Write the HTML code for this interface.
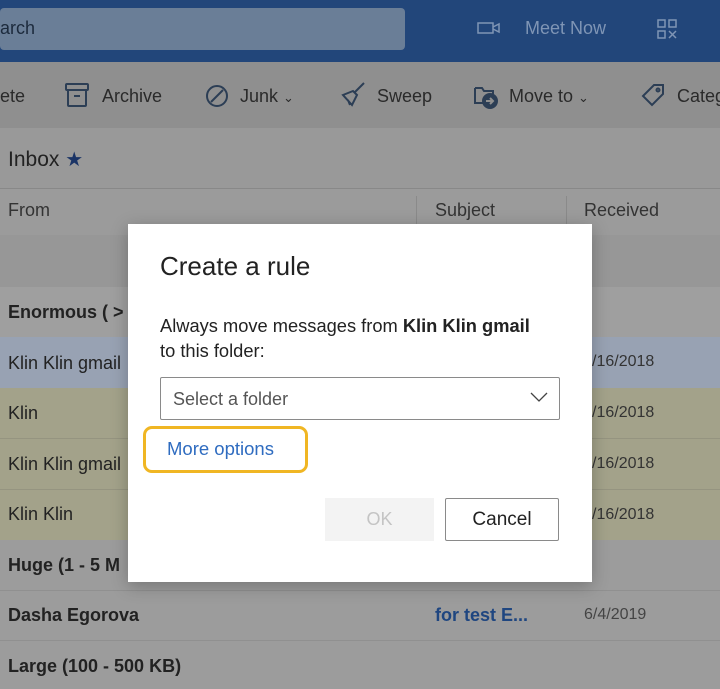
<!DOCTYPE html>
<html><head><style>
*{margin:0;padding:0;box-sizing:border-box}
body{width:720px;height:689px;overflow:hidden;font-family:"Liberation Sans",sans-serif;background:#9c9c9c;position:relative;color:#1e1e1e}
.a{position:absolute}
.t{font-size:18px;color:#222;white-space:nowrap}
</style></head><body>
<div class="a" style="left:0;top:0;width:720px;height:62px;background:#22467a"></div>
<div class="a" style="left:0;top:8px;width:405px;height:42px;background:#6a7e97;border-radius:4px"></div>
<div class="a t" style="left:0;top:18px;color:#1c2a3c">arch</div>
<svg class="a" style="left:477px;top:20px" width="26" height="16"><rect x="1" y="3" width="15" height="10" fill="none" stroke="#7f95b5" stroke-width="1.5"/><path d="M16 7 L22 4 V12 L16 9" fill="none" stroke="#7f95b5" stroke-width="1.5"/></svg>
<div class="a t" style="left:525px;top:18px;color:#7f95b5">Meet Now</div>
<svg class="a" style="left:657px;top:19px" width="20" height="20" fill="none" stroke="#7f95b5" stroke-width="1.5"><rect x="1" y="1" width="7" height="7"/><rect x="12" y="1" width="7" height="7"/><rect x="1" y="12" width="7" height="7"/><path d="M12 12 L19 19 M19 12 L12 19"/></svg>
<div class="a" style="left:0;top:62px;width:720px;height:66px;background:#8f8f8f"></div>
<div class="a t" style="left:0;top:86px;color:#2a2a2a">ete</div>
<svg class="a" style="left:65px;top:83px" width="24" height="24" fill="none" stroke="#2c3e55" stroke-width="2"><rect x="1" y="1" width="22" height="6" rx="1"/><rect x="3" y="7" width="18" height="16" rx="1"/><path d="M9 13 H15"/></svg>
<div class="a t" style="left:102px;top:86px;color:#2a2a2a">Archive</div>
<svg class="a" style="left:205px;top:84px" width="24" height="24" fill="none" stroke="#2c3e55" stroke-width="2"><circle cx="12" cy="12" r="10"/><path d="M6 18 L18 6"/></svg>
<div class="a t" style="left:240px;top:86px;color:#2a2a2a">Junk <span style="font-size:13px">⌄</span></div>
<svg class="a" style="left:340px;top:82px" width="26" height="26" fill="none" stroke="#2c3e55" stroke-width="2"><path d="M24 1 L14 11 M3 13 L13 9 L17 13 L12 23 Z M8 18 L10 23"/></svg>
<div class="a t" style="left:377px;top:86px;color:#2a2a2a">Sweep</div>
<svg class="a" style="left:473px;top:83px" width="26" height="26" fill="none" stroke="#2c3e55" stroke-width="2"><path d="M2 5 H9 L11 8 H20 V12 M2 5 V20 H10"/><circle cx="17" cy="18" r="7" fill="#2c3e55"/><path d="M13 18 H20 M17 15 L20 18 L17 21" stroke="#8f8f8f"/></svg>
<div class="a t" style="left:509px;top:86px;color:#2a2a2a">Move to <span style="font-size:13px">⌄</span></div>
<svg class="a" style="left:641px;top:83px" width="24" height="24" fill="none" stroke="#2c3e55" stroke-width="2"><path d="M13 2 H22 V11 L11 22 L2 13 Z"/><circle cx="17" cy="7" r="1.5"/></svg>
<div class="a t" style="left:677px;top:86px;color:#2a2a2a">Categ</div>
<div class="a" style="left:0;top:128px;width:720px;height:60px;background:#999"></div>
<div class="a" style="left:8px;top:147px;font-size:21px;color:#222">Inbox <span style="color:#1b3466;font-size:20px">★</span></div>
<div class="a" style="left:0;top:188px;width:720px;height:1px;background:#888"></div>
<div class="a" style="left:0;top:189px;width:720px;height:46px;background:#9b9b9b"></div>
<div class="a t" style="left:8px;top:200px;color:#333">From</div>
<div class="a" style="left:416px;top:196px;width:1px;height:30px;background:#8a8a8a"></div>
<div class="a t" style="left:435px;top:200px;color:#333">Subject</div>
<div class="a" style="left:566px;top:196px;width:1px;height:30px;background:#8a8a8a"></div>
<div class="a t" style="left:584px;top:200px;color:#333">Received</div>
<div class="a" style="left:0;top:235px;width:720px;height:52px;background:#979797"></div>
<div class="a" style="left:0;top:287px;width:720px;height:50px;background:#9f9f9f"></div>
<div class="a t" style="left:8px;top:302px;font-weight:bold">Enormous ( &gt;</div>
<div class="a" style="left:0;top:337px;width:720px;height:51px;background:#98a2b3"></div>
<div class="a t" style="left:8px;top:353px">Klin Klin gmail</div>
<div class="a" style="left:0;top:388px;width:720px;height:152px;background:#a3a28a"></div>
<div class="a" style="left:0;top:438px;width:720px;height:1px;background:#959480"></div>
<div class="a" style="left:0;top:489px;width:720px;height:1px;background:#959480"></div>
<div class="a t" style="left:8px;top:403px">Klin</div>
<div class="a t" style="left:8px;top:454px">Klin Klin gmail</div>
<div class="a t" style="left:8px;top:504px">Klin Klin</div>
<div class="a" style="left:592px;top:353px;font-size:16px;color:#333">/16/2018</div>
<div class="a" style="left:592px;top:404px;font-size:16px;color:#333">/16/2018</div>
<div class="a" style="left:592px;top:455px;font-size:16px;color:#333">/16/2018</div>
<div class="a" style="left:592px;top:506px;font-size:16px;color:#333">/16/2018</div>
<div class="a t" style="left:8px;top:555px;font-weight:bold">Huge (1 - 5 M</div>
<div class="a" style="left:0;top:590px;width:720px;height:1px;background:#909090"></div>
<div class="a t" style="left:8px;top:605px;font-weight:bold">Dasha Egorova</div>
<div class="a t" style="left:435px;top:605px;font-weight:bold;color:#1f4680">for test E...</div>
<div class="a" style="left:584px;top:606px;font-size:16px;color:#444">6/4/2019</div>
<div class="a" style="left:0;top:640px;width:720px;height:1px;background:#909090"></div>
<div class="a t" style="left:8px;top:656px;font-weight:bold">Large (100 - 500 KB)</div>

<div class="a" style="left:128px;top:224px;width:464px;height:358px;background:#fff;box-shadow:0 4px 16px rgba(0,0,0,.25)"></div>
<div class="a" style="left:160px;top:251px;font-size:26px;color:#222">Create a rule</div>
<div class="a" style="left:160px;top:313px;font-size:18.3px;line-height:25px;color:#222;width:420px;white-space:nowrap">Always move messages from <b>Klin Klin gmail</b><br>to this folder:</div>
<div class="a" style="left:160px;top:377px;width:400px;height:43px;border:1px solid #8a8a8a;border-radius:2px"></div>
<div class="a" style="left:173px;top:389px;font-size:18px;color:#555">Select a folder</div>
<svg class="a" style="left:530px;top:391px" width="18" height="12"><path d="M1 2 L9 10 L17 2" fill="none" stroke="#444" stroke-width="1.3"/></svg>
<div class="a" style="left:143px;top:426px;width:165px;height:47px;border:3px solid #f0b623;border-radius:9px"></div>
<div class="a" style="left:167px;top:438px;font-size:18.5px;color:#2f6cc0">More options</div>
<div class="a" style="left:325px;top:498px;width:109px;height:43px;background:#f3f3f3;color:#c4c4c4;font-size:18px;text-align:center;line-height:43px">OK</div>
<div class="a" style="left:445px;top:498px;width:114px;height:43px;border:1px solid #8a8a8a;border-radius:2px;font-size:19px;text-align:center;line-height:41px;color:#222">Cancel</div>
</body></html>
